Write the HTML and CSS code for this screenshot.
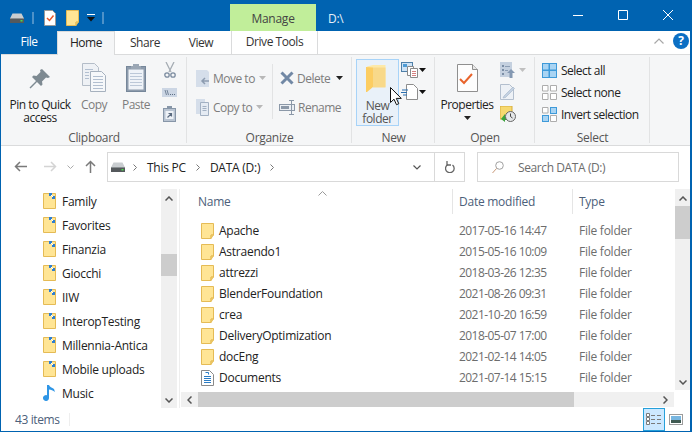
FILE: index.html
```html
<!DOCTYPE html>
<html lang="en">
<head>
<meta charset="utf-8">
<title>D:\</title>
<link rel="stylesheet" href="styles.css">
</head>
<body>
<svg class="defs" width="0" height="0">
  <symbol id="drive" viewBox="0 0 14 10"><path d="M2.500 0.500h9L14 5.500H0z" fill="#c9cdd0"/><path d="M0 5h14v5H0z" fill="#55595c"/><path d="M0 5h14v1H0z" fill="#8a8f92"/><rect x="10.500" y="7" width="2" height="1.500" fill="#4ddb4d"/></symbol>
  <symbol id="folder" viewBox="0 0 13 16"><path d="M.5.500h12v11.500h-2.500v3.500H.5z" fill="#ffe595" stroke="#e5bb55"/><path d="M10 15.500l2.500-3.500H10z" fill="#f2cf6e" stroke="#e5bb55" stroke-width=".8"/></symbol>
  <symbol id="pinned" viewBox="0 0 13 16"><path d="M.5.500h12v15H.5z" fill="#ffe595" stroke="#e5bb55"/><path d="M6 0h3v3H6zM9 3h3v3H9z" fill="#2f7fd0"/><path d="M8 2l2 2" stroke="#fff"/></symbol>
  <symbol id="caret" viewBox="0 0 7 4"><path d="M0 0h7L3.500 4z"/></symbol>
</svg>

<div class="window">
  <header class="titlebar">
    <div class="qat">
      <svg class="qat-drive" width="14" height="10"><use href="#drive"/></svg>
      <span class="qat-sep"></span>
      <svg class="qat-doc" width="12" height="16" viewBox="0 0 12 16"><path d="M.5.500h8l3 3v12H.5z" fill="#fff" stroke="#9a9a9a"/><path d="M3 8l2.500 2.500L9.500 5.500" fill="none" stroke="#e8562a" stroke-width="1.500"/></svg>
      <svg class="qat-folder" width="13" height="16"><use href="#folder"/></svg>
      <svg class="qat-drop" width="8" height="8" viewBox="0 0 8 8"><path d="M0 0h8v1H0z" fill="#fff"/><path d="M0 3h8L4 7.500z" fill="#111"/></svg>
      <span class="qat-sep"></span>
    </div>
    <div class="manage">Manage</div>
    <div class="path">D:\</div>
    <div class="controls">
      <svg width="10" height="10" viewBox="0 0 10 10"><path d="M0 5.500h10" stroke="#fff"/></svg>
      <svg width="10" height="10" viewBox="0 0 10 10"><path d="M.5.500h9v9h-9z" fill="none" stroke="#fff"/></svg>
      <svg width="10" height="10" viewBox="0 0 10 10"><path d="M0 0l10 10M10 0L0 10" stroke="#fff"/></svg>
    </div>
  </header>

  <nav class="tabs">
    <div class="tab tab-file">File</div>
    <div class="tab tab-home">Home</div>
    <div class="tab tab-share">Share</div>
    <div class="tab tab-view">View</div>
    <div class="tab tab-drive">Drive Tools</div>
    <div class="tab-right">
      <svg width="10" height="6" viewBox="0 0 10 6"><path d="M.5 5.500L5 1l4.500 4.500" fill="none" stroke="#a8a8a8" stroke-width="1.200"/></svg>
      <div class="help">?</div>
    </div>
  </nav>

  <section class="ribbon">
    <div class="group g-clipboard">
      <div class="group-body">
        <div class="big big-pin">
          <svg width="22" height="22" viewBox="0 0 22 22"><path d="M13 1l8 8-2 1-2-.500-4 4 .500 3-1.500 1.500-4-4-6.500 6.500-1-1L7 13 3 9l1.500-1.500 3 .500 4-4-.500-2z" fill="#7e8a92"/></svg>
          <span class="label dark">Pin to Quick<br>access</span>
        </div>
        <div class="big big-copy">
          <svg width="24" height="29" viewBox="0 0 24 29"><path d="M.5.500h12l4 4v18H.500z" fill="#eef1f5" stroke="#b4bdc8"/><path d="M8.500 8.500h11l4 4v16h-15z" fill="#f6f8fa" stroke="#a6b1be"/><path d="M3 6.500h8M3 9.500h4M3 12.500h4M3 15.500h4M11 13.500h10M11 16.500h10M11 19.500h10M11 22.500h10M11 25.500h10" stroke="#b2bfd0"/></svg>
          <span class="label dim">Copy</span>
        </div>
        <div class="big big-paste">
          <svg width="20" height="29" viewBox="0 0 20 29"><rect x=".5" y="3.500" width="19" height="25" fill="#8d9bac" stroke="#76879a"/><rect x="2.500" y="6.500" width="15" height="20" fill="#eff3f8"/><path d="M7 3V1h6v2h2v3H5V3z" fill="#9aa6b4"/><path d="M4 10.500h12M4 13.500h12M4 16.500h12M4 19.500h12M4 22.500h12" stroke="#bcc8d8"/></svg>
          <span class="label dim">Paste</span>
        </div>
        <div class="smallcol col-clip">
          <svg width="12" height="16" viewBox="0 0 12 16"><path d="M2 0l5 10M10 0L5 10" stroke="#a5acb3" stroke-width="1.300" fill="none"/><circle cx="3" cy="13" r="2.200" fill="none" stroke="#7c8ca0" stroke-width="1.300"/><circle cx="9" cy="13" r="2.200" fill="none" stroke="#7c8ca0" stroke-width="1.300"/></svg>
          <svg width="15" height="9" viewBox="0 0 15 9"><rect width="15" height="9" fill="#ccd6e4"/><path d="M3 2l1.500 5M5 2l1.500 5" stroke="#5d6f85" stroke-width=".8"/><path d="M8 6.500h1M10 6.500h1M12 6.500h1" stroke="#5d6f85"/></svg>
          <svg width="13" height="16" viewBox="0 0 13 16"><rect x=".5" y="2.500" width="12" height="13" fill="#b9c4d2" stroke="#8796a8"/><rect x="4" y="0" width="5" height="3" fill="#8796a8"/><rect x="2.500" y="5" width="8" height="8" fill="#eef2f7"/><path d="M4.500 11.500L8 8M5.500 7.500H8.500V10.500" stroke="#5b6b80" fill="none" stroke-width="1.200"/></svg>
        </div>
      </div>
      <div class="group-label">Clipboard</div>
    </div>

    <div class="group g-organize">
      <div class="group-body">
        <div class="org-col org-left">
          <div class="org-item">
            <svg width="13" height="17" viewBox="0 0 13 17"><path d="M0 0h11l2 2v15H0z" fill="#d5deea"/><path d="M13 11H6.500M9 8l-3 3 3 3" stroke="#8d9cb0" stroke-width="1.500" fill="none"/></svg>
            <span class="dim">Move to</span><svg class="cr" width="7" height="4" fill="#b8b8b8"><use href="#caret"/></svg>
          </div>
          <div class="org-item">
            <svg width="13" height="17" viewBox="0 0 13 17"><path d="M0 0h9v15H0z" fill="#d5deea"/><path d="M4.500 3.500h8v13h-8z" fill="#e5ebf3" stroke="#a3b1c3"/><path d="M6.500 7.500h4M6.500 9.500h4M6.500 11.500h4" stroke="#a3b1c3"/></svg>
            <span class="dim">Copy to</span><svg class="cr" width="7" height="4" fill="#b8b8b8"><use href="#caret"/></svg>
          </div>
        </div>
        <span class="org-sep"></span>
        <div class="org-col org-right">
          <div class="org-item">
            <svg width="14" height="14" viewBox="0 0 14 14"><path d="M1.500 1.500l11 11M12.500 1.500l-11 11" stroke="#7188a5" stroke-width="3"/></svg>
            <span class="dim">Delete</span><svg class="cr-del" width="7" height="4" fill="#222"><use href="#caret"/></svg>
          </div>
          <div class="org-item">
            <svg width="16" height="15" viewBox="0 0 16 15"><rect x=".5" y="4.500" width="15" height="6" fill="#eaeef3" stroke="#8b98a8"/><rect x="2" y="6" width="8" height="3" fill="#8b98a8"/><path d="M12.500 0v15M10 .5h5M10 14.500h5" stroke="#8b98a8"/></svg>
            <span class="dim">Rename</span>
          </div>
        </div>
      </div>
      <div class="group-label">Organize</div>
    </div>

    <div class="group g-new">
      <div class="group-body">
        <div class="newbtn">
          <svg class="new-icon" width="20" height="27" viewBox="0 0 20 27"><path d="M1 1.500L7 0h12.500v22H7z" fill="#fde9a8"/><path d="M7 2.500h12.500v20H7z" fill="#f8d98a"/><path d="M0 2l7 .500v19.500L1 27H0z" fill="#fccd62"/></svg>
          <span class="label dim-dark">New<br>folder</span>
        </div>
        <div class="smallcol col-new">
          <div class="small-drop">
            <svg width="17" height="16" viewBox="0 0 17 16"><rect x=".5" y=".5" width="11" height="9" fill="#cfe3f5" stroke="#4e7fa8"/><rect x="2" y="2" width="4" height="3" fill="#4e9bd4"/><path d="M6.500 4.500h6v9h-6z" fill="#fff" stroke="#8a8a8a"/><path d="M9.500 6.500h7v9h-7z" fill="#fff" stroke="#8a8a8a"/><path d="M11 9.500h4M11 11.500h4M11 13.500h4" stroke="#d58080"/></svg>
            <svg width="7" height="4" fill="#111"><use href="#caret"/></svg>
          </div>
          <div class="small-drop">
            <svg width="17" height="16" viewBox="0 0 17 16"><path d="M5.500.500h7l4 4v11h-11z" fill="#fff" stroke="#8d8d8d"/><path d="M1 6h6M0 8.500h6M2 11h4" stroke="#2a6fb0" stroke-width="1.200"/></svg>
            <svg width="7" height="4" fill="#111"><use href="#caret"/></svg>
          </div>
        </div>
      </div>
      <div class="group-label">New</div>
    </div>

    <div class="group g-open">
      <div class="group-body">
        <div class="big big-props">
          <svg width="21" height="28" viewBox="0 0 21 28"><path d="M.5.500h15l5 5v22H.5z" fill="#fdfdfd" stroke="#8f8f8f"/><path d="M15.500.5v5h5" fill="#e8e8e8" stroke="#8f8f8f"/><path d="M3 15l4 4 8-9" fill="none" stroke="#e8632b" stroke-width="2"/></svg>
          <span class="label dark">Properties</span>
          <svg class="cr-props" width="7" height="4" fill="#222"><use href="#caret"/></svg>
        </div>
        <div class="smallcol col-open">
          <div class="small-drop">
            <svg width="15" height="16" viewBox="0 0 15 16"><rect width="12" height="15" fill="#c4d0df"/><path d="M2 3h2v2H2zM2 7h2v2H2zM2 11h2v2H2z" fill="#7b8ea6"/><path d="M5 4.500h5M5 8.500h3" stroke="#8b9db4"/><path d="M11 7l4 4h-2.500v5h-3v-5H7z" fill="#8498b2"/></svg>
            <svg class="cr-open" width="7" height="4" fill="#c0c0c0"><use href="#caret"/></svg>
          </div>
          <svg width="15" height="16" viewBox="0 0 15 16"><path d="M.5.500h9l4 4v11H.5z" fill="#edf1f6" stroke="#b3bfce"/><path d="M4 12l9-9 1.500 1.500-9 9L3 14z" fill="#c3d1e2" stroke="#a3b3c8" stroke-width=".6"/></svg>
          <svg width="16" height="16" viewBox="0 0 16 16"><rect width="12" height="13" fill="#f7d96f" stroke="#d6ac3c"/><path d="M1 13l4-5v3h4v3H5v2z" fill="#3ca43c"/><circle cx="10.500" cy="10.500" r="5" fill="#e4e6e8" stroke="#666"/><path d="M10.500 7.500v3l2 1.500" fill="none" stroke="#444"/></svg>
        </div>
      </div>
      <div class="group-label">Open</div>
    </div>

    <div class="group g-select">
      <div class="group-body sel-body">
        <div class="sel-item">
          <svg width="15" height="15" viewBox="0 0 15 15"><path d="M0 0h15v15H0z" fill="#3e9ad9"/><path d="M1 1h5.500v5.500H1zM8 1h6v5.500H8zM1 8h5.500v6H1zM8 8h6v6H8z" fill="#a9d4f3"/></svg>
          <span class="dark">Select all</span>
        </div>
        <div class="sel-item">
          <svg width="15" height="15" viewBox="0 0 15 15"><path d="M.5.500h5.500v5.500H.5zM8.500.500h6v5.500h-6zM.5 8.500h5.500v6H.5zM8.500 8.500h6v6h-6z" fill="#fff" stroke="#adadad"/></svg>
          <span class="dark">Select none</span>
        </div>
        <div class="sel-item">
          <svg width="15" height="15" viewBox="0 0 15 15"><path d="M.5.500h5.500v5.500H.5zM8.500 8.500h6v6h-6z" fill="#fff" stroke="#adadad"/><path d="M8 0h7v7H8zM0 8h7v7H0z" fill="#3e9ad9"/><path d="M9 1h5v5H9zM1 9h5v5H1z" fill="#a9d4f3"/></svg>
          <span class="dark">Invert selection</span>
        </div>
      </div>
      <div class="group-label">Select</div>
    </div>
  </section>

  <section class="addressrow">
    <div class="navbtns">
      <svg class="nb-back" width="13" height="11" viewBox="0 0 13 11"><path d="M13 5.500H1.500M6 1L1.500 5.500 6 10" fill="none" stroke="#7a7a7a" stroke-width="1.500"/></svg>
      <svg class="nb-fwd" width="13" height="11" viewBox="0 0 13 11"><path d="M0 5.500h11.500M7 1l4.500 4.500L7 10" fill="none" stroke="#d4d4d4" stroke-width="1.500"/></svg>
      <svg class="nb-down" width="7" height="4" viewBox="0 0 7 4"><path d="M.5.500l3 3 3-3" fill="none" stroke="#aaa"/></svg>
      <svg class="nb-up" width="11" height="13" viewBox="0 0 11 13"><path d="M5.500 13V1.500M1 6l4.500-4.500L10 6" fill="none" stroke="#7a7a7a" stroke-width="1.500"/></svg>
    </div>
    <div class="address">
      <svg class="addr-drive" width="14" height="10"><use href="#drive"/></svg>
      <svg class="chev c1" width="4" height="7" viewBox="0 0 4 7"><path d="M.5.500l3 3-3 3" fill="none" stroke="#777"/></svg>
      <span class="crumb">This PC</span>
      <svg class="chev" width="4" height="7" viewBox="0 0 4 7"><path d="M.5.500l3 3-3 3" fill="none" stroke="#777"/></svg>
      <span class="crumb">DATA (D:)</span>
      <svg class="chev" width="4" height="7" viewBox="0 0 4 7"><path d="M.5.500l3 3-3 3" fill="none" stroke="#777"/></svg>
      <svg class="addr-down" width="8" height="5" viewBox="0 0 8 5"><path d="M.5.500L4 4 7.500.5" fill="none" stroke="#555" stroke-width="1.200"/></svg>
      <div class="refresh">
        <svg width="10" height="12" viewBox="0 0 10 12"><path d="M3 2.500A4.300 4.300 0 1 0 7.500 3" fill="none" stroke="#666" stroke-width="1.300" transform="translate(0 1)"/><path d="M2 0v4h4" fill="none" stroke="#666" stroke-width="1.300"/></svg>
      </div>
    </div>
    <div class="search">
      <svg width="12" height="13" viewBox="0 0 12 13"><circle cx="7.500" cy="4.500" r="3.800" fill="none" stroke="#a0a0a0"/><path d="M4.500 7.500L.5 12" stroke="#c99a7a"/></svg>
      <span>Search DATA (D:)</span>
    </div>
  </section>

  <section class="content">
    <aside class="navpane">
      <ul class="tree">
        <li><svg width="13" height="16"><use href="#pinned"/></svg>Family</li>
        <li><svg width="13" height="16"><use href="#pinned"/></svg>Favorites</li>
        <li><svg width="13" height="16"><use href="#pinned"/></svg>Finanzia</li>
        <li><svg width="13" height="16"><use href="#pinned"/></svg>Giocchi</li>
        <li><svg width="13" height="16"><use href="#pinned"/></svg>IIW</li>
        <li><svg width="13" height="16"><use href="#pinned"/></svg>InteropTesting</li>
        <li><svg width="13" height="16"><use href="#pinned"/></svg>Millennia-Antica</li>
        <li><svg width="13" height="16"><use href="#pinned"/></svg>Mobile uploads</li>
        <li><svg width="13" height="16" viewBox="0 0 13 16"><path d="M4 0h2c.5 2 3 2.500 5 4l1 3c-2-1.500-4-2.500-6-2.500V13a3 3 0 1 1-2-2.800z" fill="#2f96e6"/></svg>Music</li>
      </ul>
      <div class="vbar nav-bar">
        <svg width="8" height="5" viewBox="0 0 8 5"><path d="M.5 4.500L4 1l3.500 3.500" fill="none" stroke="#555" stroke-width="1.500"/></svg>
        <div class="nav-thumb"></div>
        <svg width="8" height="5" viewBox="0 0 8 5"><path d="M.5.500L4 4 7.500.5" fill="none" stroke="#555" stroke-width="1.500"/></svg>
      </div>
    </aside>
    <span class="pane-sep"></span>
    <main class="mainpane">
      <div class="main-top">
        <div class="list">
          <div class="listhead">
            <div class="h-name">Name<svg class="sortcaret" width="9" height="5" viewBox="0 0 9 5"><path d="M.5 4.500l4-4 4 4" fill="none" stroke="#9a9a9a"/></svg></div>
            <div class="h-date">Date modified</div>
            <div class="h-type">Type</div>
          </div>
          <div class="rows">
            <div class="row"><svg width="13" height="16"><use href="#folder"/></svg><span class="n">Apache</span><span class="d">2017-05-16 14:47</span><span class="t">File folder</span></div>
            <div class="row"><svg width="13" height="16"><use href="#folder"/></svg><span class="n">Astraendo1</span><span class="d">2015-05-16 10:09</span><span class="t">File folder</span></div>
            <div class="row"><svg width="13" height="16"><use href="#folder"/></svg><span class="n">attrezzi</span><span class="d">2018-03-26 12:35</span><span class="t">File folder</span></div>
            <div class="row"><svg width="13" height="16"><use href="#folder"/></svg><span class="n">BlenderFoundation</span><span class="d">2021-08-26 09:31</span><span class="t">File folder</span></div>
            <div class="row"><svg width="13" height="16"><use href="#folder"/></svg><span class="n">crea</span><span class="d">2021-10-20 16:59</span><span class="t">File folder</span></div>
            <div class="row"><svg width="13" height="16"><use href="#folder"/></svg><span class="n">DeliveryOptimization</span><span class="d">2018-05-07 17:00</span><span class="t">File folder</span></div>
            <div class="row"><svg width="13" height="16"><use href="#folder"/></svg><span class="n">docEng</span><span class="d">2021-02-14 14:05</span><span class="t">File folder</span></div>
            <div class="row"><svg width="13" height="16" viewBox="0 0 13 16"><path d="M.5.500h8l4 4v11H.5z" fill="#fff" stroke="#8a8a8a"/><path d="M3 6.500h7M3 8.500h7M3 10.500h7M3 12.500h7" stroke="#2b7cc4"/><path d="M4.500 2.500h3v2" stroke="#2b7cc4" fill="none"/></svg><span class="n">Documents</span><span class="d">2021-07-14 15:15</span><span class="t">File folder</span></div>
            <div class="row"><svg width="13" height="16" viewBox="0 0 13 16"><path d="M3 0h6v2H3z" fill="#2b7cc4"/></svg></div>
          </div>
        </div>
        <div class="vbar main-bar">
          <svg width="8" height="5" viewBox="0 0 8 5"><path d="M.5 4.500L4 1l3.500 3.500" fill="none" stroke="#555" stroke-width="1.500"/></svg>
          <div class="main-thumb"></div>
          <svg width="8" height="5" viewBox="0 0 8 5"><path d="M.5.500L4 4 7.500.5" fill="none" stroke="#555" stroke-width="1.500"/></svg>
        </div>
      </div>
      <div class="hbar">
        <svg width="5" height="8" viewBox="0 0 5 8"><path d="M4.500.5L1 4l3.500 3.500" fill="none" stroke="#555" stroke-width="1.500"/></svg>
        <div class="h-thumb"></div>
        <svg width="5" height="8" viewBox="0 0 5 8"><path d="M.5.500L4 4 .5 7.500" fill="none" stroke="#555" stroke-width="1.500"/></svg>
      </div>
    </main>
  </section>

  <footer class="status">
    <span class="count">43 items</span>
    <span class="status-sep"></span>
    <div class="view-details">
      <svg width="16" height="13" viewBox="0 0 16 13"><path d="M.5.500h3v3h-3zM.5 4.500h3v3h-3zM.5 8.500h3v3h-3z" fill="#fff" stroke="#7a7a7a"/><path d="M5 2.500h4M11 2.500h4M5 6.500h4M11 6.500h4M5 10.500h4M11 10.500h4" stroke="#7a7a7a"/></svg>
    </div>
    <div class="view-thumb">
      <svg width="14" height="11" viewBox="0 0 14 11"><rect x=".5" y=".5" width="13" height="10" fill="#fff" stroke="#9c9c9c"/><rect x="2" y="2" width="10" height="4" fill="#78b6e0"/><rect x="2" y="6" width="10" height="3" fill="#3f5a52"/></svg>
    </div>
  </footer>

  <svg class="cursor" width="13" height="19" viewBox="0 0 13 19"><path d="M.5.500v15l3.500-3.300 2.500 5.500 2.300-1-2.500-5.300h5z" fill="#fff" stroke="#111"/></svg>
</div>
</body>
</html>
```

FILE: styles.css
```css
* { box-sizing: border-box; }
html, body { margin: 0; padding: 0; }
body { width: 692px; height: 432px; overflow: hidden; font: 12px/15px "Open Sans", sans-serif; letter-spacing: -0.25px; color: #1e1e1e; background: #fff; }
svg { display: block; flex: none; }
.defs { position: absolute; }
.dark { color: #222; }
.dim { color: #7d7d7d; }
.dim-dark { color: #555; }

.window { position: relative; width: 692px; height: 432px; display: flex; flex-direction: column; background: #fff; border-left: 1px solid #0063b1; border-right: 2px solid #0063b1; border-bottom: 1px solid #0063b1; }

.titlebar { height: 31px; flex: none; display: flex; background: #0063b1; margin-right: -2px; margin-left: -1px; color: #fff; }
.qat { width: 230px; display: flex; align-items: center; padding-left: 10px; padding-top: 5px; }
.qat-sep { width: 2px; height: 12px; background: #4d91c8; }
.qat-drive { margin-right: 8px; }
.qat-doc { margin: 0 10px 0 10px; }
.qat-folder { margin-right: 8px; }
.qat-drop { margin-right: 7px; }
.manage { width: 86px; margin-top: 4px; background: #c1ee9a; color: #444; display: flex; align-items: center; justify-content: center; padding-top: 1px; }
.path { margin-left: 12px; padding-top: 11px; color: #e6f0f8; }
.controls { margin-left: auto; width: 130px; display: flex; gap: 35px; padding: 10px 0 0 11px; }

.tabs { height: 24px; flex: none; display: flex; background: #fff; border-bottom: 1px solid #dadbdc; letter-spacing: -0.45px; }
.tab { display: flex; align-items: center; justify-content: center; height: 24px; color: #333; padding-bottom: 2px; }
.tab-file { width: 56px; background: #0063b1; color: #fff; height: 23px; }
.tab-home { width: 58px; background: #f5f6f7; border: 1px solid #dadbdc; border-bottom: 0; color: #222; }
.tab-share { width: 60px; }
.tab-view { width: 52px; }
.tab-drive { width: 87px; margin-left: 4px; height: 23px; border-left: 1px solid #dadbdc; border-right: 1px solid #dadbdc; }
.tab-right { margin-left: auto; display: flex; align-items: center; gap: 9px; padding-right: 1px; padding-bottom: 3px; }
.help { width: 16px; height: 16px; border-radius: 50%; background: #0b6fc4; color: #fff; font-weight: 700; font-size: 12px; line-height: 16px; text-align: center; letter-spacing: 0; }

.ribbon { height: 91px; flex: none; display: flex; background: #f5f6f7; border-bottom: 1px solid #dadbdc; letter-spacing: -0.5px; }
.group { display: flex; flex-direction: column; height: 90px; position: relative; }
.group-body { height: 75px; display: flex; }
.group-label { height: 15px; text-align: center; color: #555; line-height: 15px; letter-spacing: -0.3px; }
.group::after { content: ""; position: absolute; right: 0; top: 2px; bottom: 2px; width: 1px; background: #e2e3e4; }
.g-clipboard { width: 186px; }
.g-organize { width: 165px; }
.g-new { width: 83px; }
.g-open { width: 100px; }
.g-select { width: 115px; }

.big { display: flex; flex-direction: column; align-items: center; }
.label { text-align: center; line-height: 13px; white-space: nowrap; }
.big-pin { width: 64px; margin-left: 7px; padding-top: 13px; }
.big-pin .label { margin-top: 8px; }
.big-copy { width: 36px; margin-left: 4px; padding-top: 8px; }
.big-paste { width: 36px; margin-left: 6px; padding-top: 8px; }
.big-copy .label, .big-paste .label { margin-top: 6px; }
.smallcol { display: flex; flex-direction: column; align-items: flex-start; }
.col-clip { margin-left: 7px; padding-top: 7px; align-items: center; width: 17px; gap: 10px; }
.col-clip svg:nth-child(3) { margin-top: -1px; }

.org-col { display: flex; flex-direction: column; gap: 13px; padding-top: 15px; }
.org-item { display: flex; align-items: center; height: 16px; }
.org-left { width: 85px; padding-left: 9px; }
.org-left .org-item span { margin-left: 4px; }
.cr { margin-left: 4px; }
.org-sep { width: 1px; height: 55px; margin-top: 9px; background: #e2e3e4; }
.org-right { margin-left: 6px; }
.org-right .org-item span { margin-left: 3px; }
.org-right .org-item:first-child { padding-left: 1px; }
.cr-del { margin-left: 6px; }

.newbtn { width: 43px; height: 67px; margin: 4px 0 0 4px; background: #e9f1f9; border: 1px solid #a7d3f8; display: flex; flex-direction: column; align-items: center; padding-top: 5px; color: #555; }
.new-icon { margin-right: 3px; }
.newbtn .label { margin-top: 7px; }
.col-new { margin-left: 2px; padding-top: 7px; gap: 6px; }
.small-drop { display: flex; align-items: center; gap: 1px; }

.big-props { width: 62px; padding-top: 9px; margin-left: 1px; }
.big-props .label { margin-top: 6px; }
.cr-props { margin-top: 5px; }
.col-open { margin-left: 2px; padding-top: 7px; gap: 6px; }
.cr-open { margin-left: 3px; }

.sel-body { flex-direction: column; gap: 7px; padding: 8px 0 0 7px; }
.sel-item { display: flex; align-items: center; gap: 4px; height: 15px; }

.addressrow { height: 43px; flex: none; display: flex; padding-top: 6px; background: #fff; }
.navbtns { width: 106px; height: 29px; display: flex; align-items: center; padding-left: 13px; }
.nb-fwd { margin-left: 17px; }
.nb-down { margin-left: 10px; }
.nb-up { margin-left: 11px; }
.address { width: 358px; height: 30px; display: flex; align-items: center; border: 1px solid #d9d9d9; }
.addr-drive { margin-left: 3px; }
.chev { margin: 0 10px; }
.chev.c1 { margin-left: 8px; }
.crumb { color: #222; }
.addr-down { margin-left: auto; margin-right: 13px; }
.refresh { width: 30px; height: 28px; border-left: 1px solid #d9d9d9; display: flex; align-items: center; justify-content: center; }
.search { width: 202px; height: 30px; margin-left: 12px; border: 1px solid #d9d9d9; display: flex; align-items: center; padding-left: 14px; gap: 14px; color: #6d6d6d; letter-spacing: -0.4px; }

.content { height: 219px; flex: none; display: flex; }
.navpane { width: 176px; flex: none; display: flex; }
.tree { width: 160px; margin: 0; padding: 0; list-style: none; }
.tree li { height: 24px; display: flex; align-items: center; padding-left: 42px; gap: 6px; color: #222; }
.vbar { flex: none; background: #f0f0f0; display: flex; flex-direction: column; align-items: center; padding: 7px 0 5px; }
.nav-bar { width: 16px; }
.nav-thumb { width: 16px; height: 22px; background: #cdcdcd; margin-top: 53px; margin-bottom: auto; }
.pane-sep { width: 1px; flex: none; margin-left: 2px; margin-right: 1px; background: #eeeeee; }
.mainpane { width: 509px; flex: none; display: flex; flex-direction: column; }
.main-top { height: 201px; display: flex; }
.list { width: 494px; overflow: hidden; flex: none; }
.listhead { display: flex; height: 25px; padding-top: 5px; color: #4c607a; margin-bottom: 6px; }
.h-name { width: 271px; padding-left: 17px; position: relative; }
.h-date, .h-type { position: relative; margin-top: -5px; height: 25px; padding: 5px 0 0 6px; border-left: 1px solid #e5e5e5; }
.h-date { width: 120px; }
.sortcaret { position: absolute; left: 137px; top: -3px; }
.rows { height: 170px; }
.row { height: 21px; display: flex; align-items: center; padding-left: 20px; }
.n { margin-left: 5px; width: 240px; color: #222; }
.d { width: 120px; color: #6d6d6d; letter-spacing: -0.55px; }
.t { color: #6d6d6d; }
.main-bar { width: 15px; }
.main-thumb { width: 15px; height: 33px; background: #cdcdcd; margin-top: 5px; margin-bottom: auto; }
.hbar { width: 493px; height: 15px; margin-top: 2px; background: #f0f0f0; display: flex; align-items: center; padding: 0 6px; }
.h-thumb { width: 376px; height: 15px; background: #cdcdcd; margin-left: 6px; margin-right: auto; }

.status { height: 23px; flex: none; display: flex; align-items: center; padding-left: 14px; color: #4c607a; letter-spacing: -0.4px; }
.count { width: 54px; }
.status-sep { width: 1px; height: 13px; background: #eeeeee; }
.view-details { width: 22px; height: 23px; margin-left: auto; margin-right: 4px; background: #cce8ff; border: 1px solid #26a0da; display: flex; align-items: center; justify-content: center; }
.view-thumb { margin-right: 7px; }

.cursor { position: absolute; left: 389px; top: 87px; }
```
